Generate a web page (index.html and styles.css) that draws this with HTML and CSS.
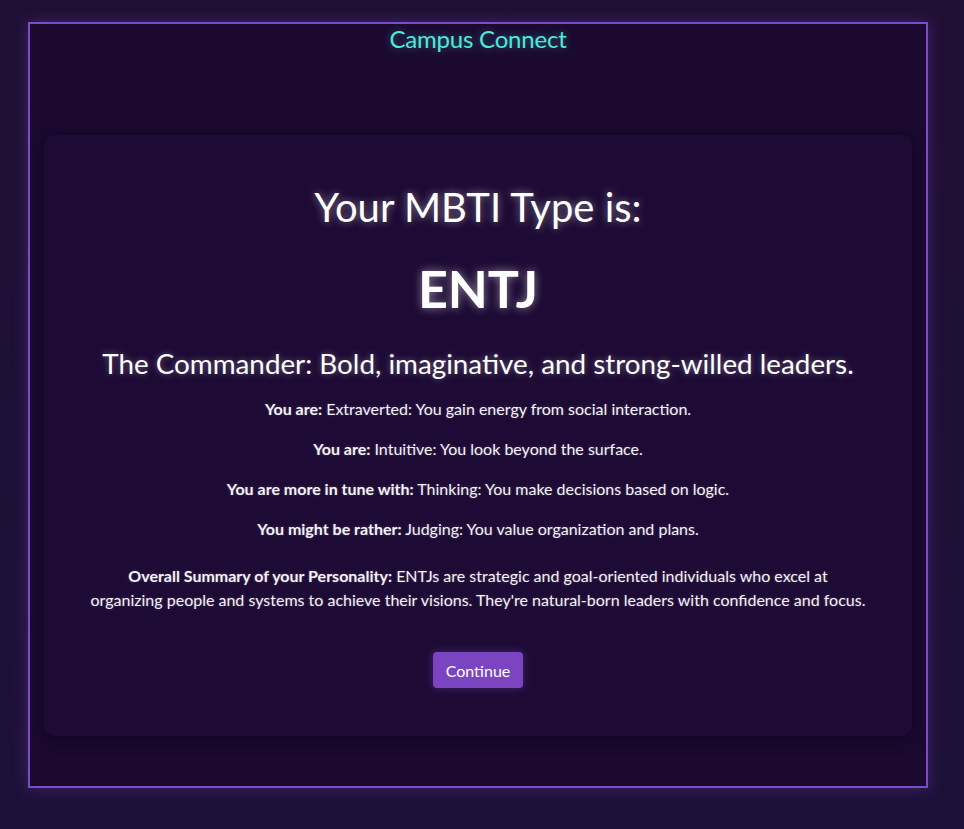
FILE: index.html
```html
<!DOCTYPE html>
<html lang="en">
<head>
<meta charset="utf-8">
<title>Campus Connect</title>
<link rel="stylesheet" href="styles.css">
</head>
<body>
<div class="frame">
  <h1 class="brand">Campus Connect</h1>
  <main class="card">
    <h2 class="lead">Your MBTI Type is:</h2>
    <div class="type">ENTJ</div>
    <h3 class="persona">The Commander: Bold, imaginative, and strong-willed leaders.</h3>
    <p class="trait"><strong>You are:</strong> Extraverted: You gain energy from social interaction.</p>
    <p class="trait"><strong>You are:</strong> Intuitive: You look beyond the surface.</p>
    <p class="trait"><strong>You are more in tune with:</strong> Thinking: You make decisions based on logic.</p>
    <p class="trait"><strong>You might be rather:</strong> Judging: You value organization and plans.</p>
    <p class="summary"><strong>Overall Summary of your Personality:</strong> ENTJs are strategic and goal-oriented individuals who excel at organizing people and systems to achieve their visions. They're natural-born leaders with confidence and focus.</p>
    <button class="continue" type="button">Continue</button>
  </main>
</div>
</body>
</html>
```

FILE: styles.css
```css
html, body {
  margin: 0;
  padding: 0;
}
body {
  background: linear-gradient(180deg, #200f35 0%, #1d1139 100%);
  min-height: 829px;
  font-family: Lato, "Open Sans", sans-serif;
  color: #f4f2f7;
  padding: 22px 0 0 28px;
  box-sizing: border-box;
}
.frame {
  width: 900px;
  height: 766px;
  box-sizing: border-box;
  border: 2px solid #7c4bc6;
  background: #1b0930;
  box-shadow: 0 0 14px rgba(124, 75, 198, 0.35);
  display: flex;
  flex-direction: column;
  align-items: center;
  padding: 0 14px;
}
.brand {
  margin: 0;
  font-size: 24px;
  font-weight: 400;
  color: #4ee9d9;
  text-shadow: 0 0 8px rgba(78, 233, 217, 0.45);
  line-height: 30px;
  letter-spacing: -0.2px;
}
.card {
  margin-top: 81px;
  width: 868px;
  height: 601px;
  box-sizing: border-box;
  background: #1e0b35;
  border-radius: 10px;
  box-shadow: 0 3px 14px rgba(12, 0, 24, 0.6);
  display: flex;
  flex-direction: column;
  align-items: center;
  text-align: center;
  padding: 48px 40px 0;
}
.lead {
  margin: 0;
  font-size: 40px;
  font-weight: 400;
  line-height: 48px;
  color: #ffffff;
  text-shadow: 0 0 8px rgba(255, 255, 255, 0.45);
}
.type {
  margin-top: 27px;
  font-size: 52px;
  font-weight: 700;
  line-height: 60px;
  color: #ffffff;
  text-shadow: 0 0 10px rgba(255, 255, 255, 0.5);
}
.persona {
  margin: 29px 0 8px;
  font-size: 27.8px;
  font-weight: 400;
  line-height: 34px;
  color: #ffffff;
  text-shadow: 0 0 6px rgba(255, 255, 255, 0.35);
}
.trait {
  margin: 0;
  font-size: 16px;
  line-height: 40px;
  text-shadow: 0 0 3px rgba(255, 255, 255, 0.2);
}
.trait strong, .summary strong {
  font-weight: 700;
}
.summary {
  margin: 15px 0 0;
  font-size: 16px;
  line-height: 24px;
  max-width: 775px;
  text-shadow: 0 0 3px rgba(255, 255, 255, 0.2);
}
.continue {
  margin-top: 40px;
  width: 90px;
  height: 36px;
  border: none;
  border-radius: 4px;
  background: #7b44c1;
  color: #ffffff;
  font-family: Lato, "Open Sans", sans-serif;
  font-size: 16px;
  box-shadow: 0 0 8px rgba(123, 68, 193, 0.45);
  cursor: pointer;
}
```
